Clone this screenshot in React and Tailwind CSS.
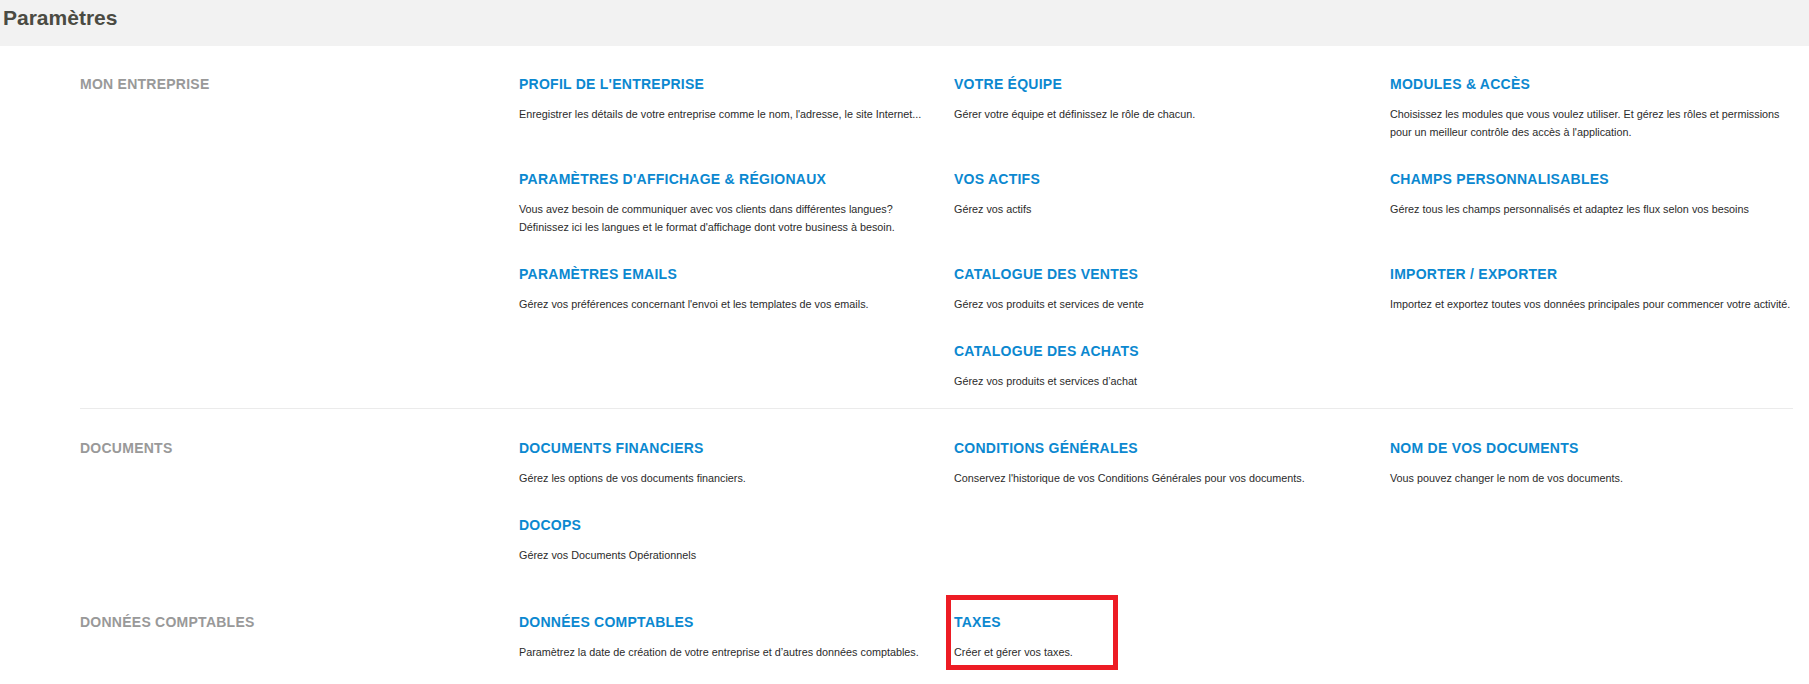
const sections = [
  {
    label: 'MON ENTREPRISE',
    pad: 'pt-[28px] border-[#ebebeb]',
    items: [
      { title: "PROFIL DE L'ENTREPRISE", text: "Enregistrer les détails de votre entreprise comme le nom, l'adresse, le site Internet..." },
      { title: 'VOTRE ÉQUIPE', text: 'Gérer votre équipe et définissez le rôle de chacun.' },
      { title: 'MODULES & ACCÈS', text: "Choisissez les modules que vous voulez utiliser. Et gérez les rôles et permissions pour un meilleur contrôle des accès à l'application." },
      { title: "PARAMÈTRES D'AFFICHAGE & RÉGIONAUX", text: "Vous avez besoin de communiquer avec vos clients dans différentes langues? Définissez ici les langues et le format d'affichage dont votre business à besoin." },
      { title: 'VOS ACTIFS', text: 'Gérez vos actifs' },
      { title: 'CHAMPS PERSONNALISABLES', text: 'Gérez tous les champs personnalisés et adaptez les flux selon vos besoins' },
      { title: 'PARAMÈTRES EMAILS', text: "Gérez vos préférences concernant l'envoi et les templates de vos emails." },
      { title: 'CATALOGUE DES VENTES', text: 'Gérez vos produits et services de vente' },
      { title: 'IMPORTER / EXPORTER', text: 'Importez et exportez toutes vos données principales pour commencer votre activité.' },
      null,
      { title: 'CATALOGUE DES ACHATS', text: "Gérez vos produits et services d’achat" },
    ],
  },
  {
    label: 'DOCUMENTS',
    pad: 'pt-[29px] border-transparent',
    items: [
      { title: 'DOCUMENTS FINANCIERS', text: 'Gérez les options de vos documents financiers.' },
      { title: 'CONDITIONS GÉNÉRALES', text: "Conservez l'historique de vos Conditions Générales pour vos documents." },
      { title: 'NOM DE VOS DOCUMENTS', text: 'Vous pouvez changer le nom de vos documents.' },
      { title: 'DOCOPS', text: 'Gérez vos Documents Opérationnels' },
    ],
  },
  {
    label: 'DONNÉES COMPTABLES',
    pad: 'pt-[29px] border-transparent',
    items: [
      { title: 'DONNÉES COMPTABLES', text: "Paramètrez la date de création de votre entreprise et d’autres données comptables." },
      { title: 'TAXES', text: 'Créer et gérer vos taxes.', highlight: true },
    ],
  },
];

function Item({ item }) {
  if (!item) return <div />;
  return (
    <div className="relative">
      {item.highlight && (
        <div className="absolute left-[-8px] top-[-17px] w-[172px] h-[75px] border-[5px] border-[#ed1c24] pointer-events-none" />
      )}
      <a href="#" className="block text-[14px] leading-[20px] font-bold tracking-[0.25px] text-[#0b88d0]">
        {item.title}
      </a>
      <p className="mt-[11px] text-[10.8px] leading-[18px] text-[#2b2b2b]">{item.text}</p>
    </div>
  );
}

export default function App() {
  return (
    <div className="min-h-[684px] bg-white font-['Liberation_Sans',Arial,sans-serif]">
      <div className="h-[46px] bg-[#f2f2f2] pl-[3px] pt-[6px]">
        <h1 className="text-[21px] leading-[24px] font-bold text-[#4b4b43]">Paramètres</h1>
      </div>
      <div className="pl-[80px] pr-[16px]">
        {sections.map((s) => (
          <section key={s.label} className={`flex pb-[18px] border-b ${s.pad}`}>
            <div className="w-[439px] shrink-0 text-[14px] leading-[20px] font-bold tracking-[0.25px] text-[#999999]">
              {s.label}
            </div>
            <div className="flex-1 grid grid-cols-[420px_421px_1fr] gap-x-[15px] gap-y-[28px]">
              {s.items.map((it, i) => (
                <Item key={i} item={it} />
              ))}
            </div>
          </section>
        ))}
      </div>
    </div>
  );
}
